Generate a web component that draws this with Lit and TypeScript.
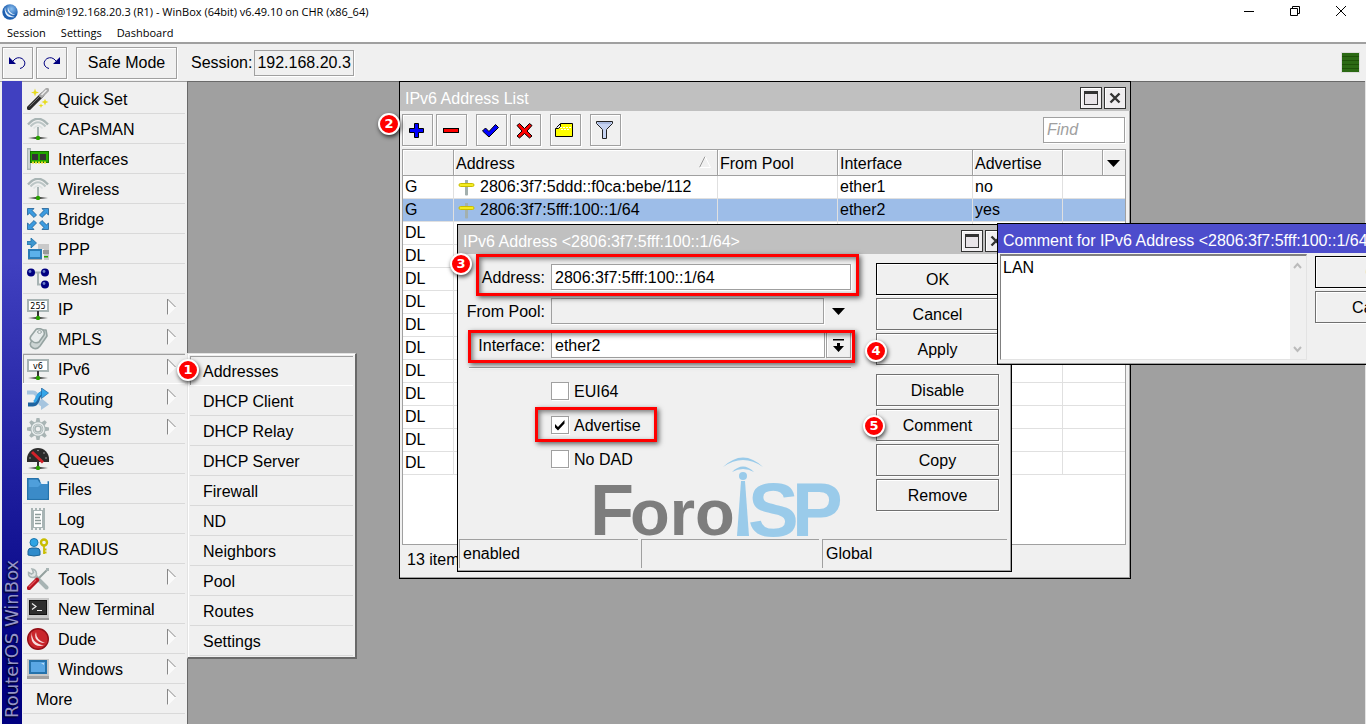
import { LitElement, html, svg, css, nothing } from "lit";

const GREY = "#a8b4b4";

const base = svg`
  <defs><linearGradient id="fade"><stop offset="0" stop-color="#333" stop-opacity="0"/>
  <stop offset=".5" stop-color="#111"/><stop offset="1" stop-color="#333" stop-opacity="0"/></linearGradient></defs>
  <rect x="1" y="19" width="20" height="2" fill="url(#fade)"/>
  <circle cx="11" cy="20" r="2.2" fill="#2aa000"/>`;

const stand = svg`<rect x="10" y="13" width="2" height="6" fill="#333"/>${base}`;

const antenna = svg`
  <g fill="none">
    <path d="M1 6.500Q11 -5 21 6.500" stroke="${GREY}" stroke-width="2.400"/>
    <path d="M3.500 8.500Q11 0 18.500 8.500" stroke="#bcc6c6" stroke-width="2.200"/>
    <path d="M6.500 10.500Q11 5 15.500 10.500" stroke="#dde2e2" stroke-width="1.600"/>
  </g>
  <rect x="10" y="9" width="2" height="10" fill="${GREY}"/>${base}`;

const sign = (label: string) => svg`
  <rect x="1" y="2" width="20" height="11" fill="#fff" stroke="${GREY}" stroke-width="2"/>
  <text x="11" y="11" text-anchor="middle" font-family="DejaVu Sans, sans-serif" font-size="8" fill="#000">${label}</text>
  ${stand}`;

const ICONS: Record<string, unknown> = {
  wand: svg`
    <path d="M2 20L15 7" stroke="#2b2b2b" stroke-width="4.500" stroke-linecap="round"/>
    <path d="M2.500 18.500L14 7" stroke="#777" stroke-width="1"/>
    <path d="M14.500 7.500L20 2" stroke="#a9a9a9" stroke-width="4.500" stroke-linecap="round"/>
    <path d="M14.500 7L19.500 2" stroke="#eee" stroke-width="1.500"/>
    <path d="M8 .5L9 3.500L12 4.500L9 5.500L8 8.500L7 5.500L4 4.500L7 3.500ZM18 11L19 13L21.500 14L19 15L18 17.500L17 15L14.500 14L17 13ZM14 15.500L14.700 17L16.500 17.500L14.700 18.200L14 20L13.300 18.200L11.500 17.500L13.300 17Z" fill="#e6dc1e"/>`,
  antenna,
  card: svg`
    <rect x=".75" y=".75" width="2.500" height="20.500" fill="#eef2f2" stroke="${GREY}" stroke-width="1.500"/>
    <rect x="3.500" y="3.500" width="18" height="11" fill="#22a800" stroke="#157000"/>
    <rect x="5" y="6" width="6" height="6" fill="#333"/><rect x="13" y="6" width="6" height="6" fill="#333"/>
    <path d="M5 14.500H20" stroke="#e6dc1e" stroke-width="2" stroke-dasharray="2 1"/>`,
  bridge: svg`
    <g fill="#3c9be0" stroke="#1f5f94" stroke-width=".8">
      ${[0, 90, 180, 270].map((a) => svg`<path transform="rotate(${a} 11 11)" d="M.5 .5H7L5.200 2.600L9.500 7L7 9.500L2.600 5.200L.5 7Z"/>`)}
    </g>`,
  ppp: svg`
    <path d="M0 3.500H4V0L9.500 5L4 10V6.500H0Z" fill="#3d96cf" stroke="#1d6ea6" stroke-width=".8"/>
    <path d="M11 6H22V22H17V11H11Z" fill="#c9c9c9"/><rect x="16" y="12" width="6" height="4" fill="#999"/>
    <rect x="17" y="18" width="4" height="1.500" fill="#2aa000"/>
    <rect x="2" y="12" width="12" height="8" fill="#5cb0ea" stroke="#2b7cb6" stroke-width="2"/>
    <rect x="1" y="21" width="14" height="1" fill="#aaa"/>`,
  mesh: svg`
    <path d="M4 4.500H18M11 4.500V16.500H18" fill="none" stroke="${GREY}" stroke-width="2"/>
    ${[[4, 4.5], [18, 4.5], [18, 16.5]].map(([x, y]) => svg`<circle cx="${x}" cy="${y}" r="4" fill="#000080"/><circle cx="${x - 1}" cy="${y - 1}" r="1.400" fill="#6a7fc8"/>`)}`,
  ip: sign("255"),
  ipv6: sign("v6"),
  mpls: svg`
    <g stroke="#95a3a1" stroke-width="1.600" fill="#cdd5d4" stroke-linejoin="round">
      <path d="M9 9L14 2H19L20 8L13 18Q10 22 6 20Q2 18 4 14Z"/>
      <path d="M4 8L9 1.500Q12 -.5 16 2Q18 4 17 7L12 14Q8 16 5 13Q2 11 4 8Z" fill="#e8ecec"/>
    </g><ellipse cx="12.500" cy="4" rx="2" ry="1.300" fill="#fff" stroke="#95a3a1"/>`,
  routing: svg`
    <path d="M0 4.500H6C13 4.500 9 16.500 16 16.500" fill="none" stroke="#a6c5df" stroke-width="4"/>
    <path d="M14 10L22 16.500L14 22Z" fill="#a6c5df"/>
    <path d="M1 16.500H6C13 16.500 9 5 16 5" fill="none" stroke="#1f64a0" stroke-width="4"/>
    <path d="M7 14C11 12 9 5 15.500 5" fill="none" stroke="#35a5e8" stroke-width="3"/>
    <path d="M14.500 0L21.500 5L14.500 10.500Z" fill="#35a5e8" stroke="#1f64a0" stroke-width=".7"/>`,
  gear: svg`
    <g fill="${GREY}">${[0, 45, 90, 135, 180, 225, 270, 315].map((a) => svg`<path transform="rotate(${a} 11 11)" d="M8.500 5L9.500 0H12.500L13.500 5Z"/>`)}</g>
    <circle cx="11" cy="11" r="6" fill="#e3e8e8" stroke="${GREY}" stroke-width="3"/>
    <circle cx="11" cy="11" r="6" fill="none" stroke="#e9eded" stroke-width="1.400"/>
    <circle cx="11" cy="11" r="3" fill="#f0f0f0" stroke="${GREY}" stroke-width="1.500"/>`,
  gauge: svg`
    <path d="M0 14V11A11 11 0 0 1 22 11V14Z" fill="#2b2b2b"/>
    <g fill="#aaa"><circle cx="3" cy="10" r=".8"/><circle cx="11" cy="2.500" r=".8"/><circle cx="17" cy="5" r=".8"/><circle cx="19" cy="10" r=".8"/></g>
    <path d="M5 4L16 14.500" stroke="#d3222a" stroke-width="3"/>${stand}`,
  folder: svg`
    <path d="M.8 .8H11L13 4H21.200V21.200H.8Z" fill="#4f9fdb" stroke="#2572ab" stroke-width="1.600"/>
    <path d="M13 3H20.500V6H14.500Z" fill="#e9f1f8"/><path d="M2 20.500V9H11L14 6H20.500V20.500Z" fill="#3b8bc8"/>`,
  log: svg`
    <path d="M4 0H6V2H8V0H10V2H12V0H14V2H16V0H18V22H16V20H14V22H12V20H10V22H8V20H6V22H4Z" fill="${GREY}"/>
    <rect x="7" y="3" width="8" height="16" fill="#fff"/>
    <path d="M8 6.500H14M8 9.500H13M8 12.500H14M8 15.500H14" stroke="#8d9b99" stroke-width="1.500"/>`,
  user: svg`
    <circle cx="7" cy="4.500" r="4" fill="#2fa4e4" stroke="#1b77ae"/>
    <path d="M1 17V13Q1 10 5 10H9Q13 10 13 13V17Q7 19 1 17Z" fill="#2f8bcb" stroke="#1b6396"/>
    <circle cx="17" cy="4.500" r="3" fill="none" stroke="#c9bd00" stroke-width="2.400"/>
    <path d="M17 8V16M17 11.500H19.500M17 14.500H19.500" fill="none" stroke="#c9bd00" stroke-width="1.800"/>`,
  tools: svg`
    <path d="M8 8L19.500 19.500" stroke="${GREY}" stroke-width="4" stroke-linecap="round"/>
    <path d="M1.500 4.500Q1 9 5.500 9.500Q9.500 9.500 9.500 5.500Q9 1.500 5 1L6.500 4.500L4.500 6Z" fill="#e0e5e5" stroke="${GREY}" stroke-width="1.500"/>
    <path d="M10 12L20.500 1.500" stroke="#93a09e" stroke-width="2"/><rect x="19" y="0" width="3" height="3" fill="${GREY}"/>
    <path d="M2 20L10 12" stroke="#b5141f" stroke-width="4.500" stroke-linecap="round"/>
    <path d="M2 19L9 12" stroke="#e5525a" stroke-width="1.200"/>`,
  terminal: svg`
    <rect width="22" height="22" fill="#c8c8c8"/><rect y="20" width="22" height="2" fill="#999"/>
    <rect x="2.500" y="2.500" width="17" height="14" fill="#2d2d2d" stroke="#111"/>
    <path d="M5 5.500L9 8.500L5 11.500M10 12.500H15" fill="none" stroke="#eee" stroke-width="1.200"/>`,
  dude: svg`
    <circle cx="11" cy="11" r="10.300" fill="#c9262c" stroke="#930e16" stroke-width="1.400"/>
    <path d="M5 4Q4 15 17 17.500Q8 19.500 5 13Q3.500 9 5 4ZM9 4Q9 12 18 15Q11 15 8.500 10Q7.500 7 9 4Z" fill="#f7dede"/>`,
  monitor: svg`
    <rect y="1" width="22" height="20" fill="#c8c8c8"/><rect y="18" width="22" height="3" fill="#a2a2a2"/>
    <rect x="3" y="3" width="16" height="12" fill="#5aa7e4" stroke="#2572ab" stroke-width="2"/>
    <path d="M14 5H17V7Z" fill="#b9dcf6"/>`,
};

const MENU: [string, string, boolean][] = [
  ["Quick Set", "wand", false],
  ["CAPsMAN", "antenna", false],
  ["Interfaces", "card", false],
  ["Wireless", "antenna", false],
  ["Bridge", "bridge", false],
  ["PPP", "ppp", false],
  ["Mesh", "mesh", false],
  ["IP", "ip", true],
  ["MPLS", "mpls", true],
  ["IPv6", "ipv6", true],
  ["Routing", "routing", true],
  ["System", "gear", true],
  ["Queues", "gauge", false],
  ["Files", "folder", false],
  ["Log", "log", false],
  ["RADIUS", "user", false],
  ["Tools", "tools", true],
  ["New Terminal", "terminal", false],
  ["Dude", "dude", true],
  ["Windows", "monitor", true],
  ["More", "", true],
];

const SUBMENU = ["Addresses", "DHCP Client", "DHCP Relay", "DHCP Server", "Firewall", "ND", "Neighbors", "Pool", "Routes", "Settings"];

const ROWS = [
  { flag: "G", address: "2806:3f7:5ddd::f0ca:bebe/112", iface: "ether1", adv: "no", selected: false },
  { flag: "G", address: "2806:3f7:5fff:100::1/64", iface: "ether2", adv: "yes", selected: true },
  ...Array.from({ length: 11 }, () => ({ flag: "DL", address: "", iface: "", adv: "", selected: false })),
];

/* Step markers and frames, placed on the desktop canvas. */
const STEPS = [
  { n: 1, x: 177, y: 278 },
  { n: 2, x: 378, y: 32 },
  { n: 3, x: 450, y: 172 },
  { n: 4, x: 865, y: 259 },
  { n: 5, x: 863, y: 334 },
];
const FRAMES = [
  { x: 476, y: 173, w: 383, h: 42 },
  { x: 468, y: 249, w: 387, h: 33 },
  { x: 535, y: 326, w: 122, h: 35 },
];

const TOOLS: [string, unknown, boolean][] = [
  ["Add", svg`<path d="M7.500 3.500H11.500V8.500H16.500V12.500H11.500V17.500H7.500V12.500H2.500V8.500H7.500Z" fill="#00f" stroke="#000"/>`, false],
  ["Remove", svg`<rect x="2.500" y="8.500" width="15" height="4" fill="#f00" stroke="#000"/>`, true],
  ["Enable", svg`<path d="M1.500 11L4.500 8L8 11.500L14.500 4.500L17.500 7.500L8 17Z" fill="#00f" stroke="#000"/>`, false],
  ["Disable", svg`<path d="M2 5.500L4.500 3.500L9.500 8.500L14.500 3.500L17 5.500L12 11L17 16L14.500 18L9.500 13.500L4.500 18L2 16L7 11Z" fill="#f00" stroke="#000"/>`, true],
  ["Comment", svg`<path d="M5.500 3.500H17.500V16.500H.5V8.500H3.500L5.500 6.500Z" fill="#ff0" stroke="#000"/><path d="M1.500 7.500L5 4" stroke="#000"/><path d="M5 7.500H16M6 9.500H15" stroke="#fff" stroke-dasharray="2 1"/>`, true],
  ["Filter", svg`<path d="M1.500 1.500H17.500V3.500L11.500 9.500V18.500H7.500V9.500L1.500 3.500Z" fill="#c7d4f2" stroke="#222"/><path d="M3 3H16" stroke="#8fa2cf"/>`, false],
];

const windowButtons = html`
  <button class="wb" aria-label="Maximize"><svg width="16" height="16" viewBox="0 0 16 16"><rect x="1.500" y="1.500" width="13" height="13" fill="#e8e4e8" stroke="#333"/><rect x="1" y="1" width="14" height="3" fill="#333"/></svg></button>
  <button class="wb" aria-label="Close"><svg width="16" height="16" viewBox="0 0 16 16"><path d="M3.500 3.500L12.500 12.500M12.500 3.500L3.500 12.500" stroke="#333" stroke-width="2.400"/></svg></button>`;

class AppRoot extends LitElement {
  static styles = css`
    :host {
      display: flex;
      flex-direction: column;
      height: 100vh;
      overflow: hidden;
      background: #f0f0f0;
      color: #000;
      font: 16px/20px "Liberation Sans", Arial, sans-serif;
    }
    * { box-sizing: border-box; }
    button, input, select, textarea {
      font: inherit;
      color: inherit;
      margin: 0;
      padding: 0;
      border-radius: 0;
      outline: none;
    }
    svg { display: block; flex: none; }
    ul { list-style: none; margin: 0; padding: 0; }

    .caption, .menubar {
      display: flex;
      align-items: center;
      background: #fff;
      font: 11px/16px "Open Sans", "Noto Sans", sans-serif;
    }
    .caption { height: 24px; padding: 0 17px 0 2px; gap: 5px; }
    .caption .name { flex: 1; white-space: nowrap; }
    .caption .sys { display: flex; gap: 30px; }
    .caption .sys button { border: 0; background: none; width: 16px; height: 16px; }
    .menubar { height: 18px; padding: 0 7px; gap: 15px; }
    .menubar button { border: 0; background: none; }

    .toolbar {
      display: flex;
      align-items: center;
      height: 39px;
      padding: 0 6px 0 2px;
      border-top: 2px solid #a0a0a0;
      gap: 3px;
    }
    .btn {
      display: flex;
      align-items: center;
      justify-content: center;
      height: 32px;
      background: #f0f0f0;
      border: 1px solid #a0a0a0;
      box-shadow: 1px 1px 0 #fff, inset 1px 1px 0 #fff;
    }
    .square { width: 31px; }
    .safe { width: 101px; margin: 0 11px 0 6px; }
    .session { display: flex; flex: 1; align-items: center; gap: 2px; }
    .session .field { width: 100px; padding: 0 2px; }
    .field {
      height: 26px;
      border: 1px solid #a0a0a0;
      background: #fff;
      padding: 1px 3px 0;
      box-shadow: 1px 1px 0 #fff;
      min-width: 0;
    }
    .readonly { background: #f0f0f0; }
    .load {
      width: 19px;
      height: 21px;
      border: 1px solid #ddd;
      background: repeating-linear-gradient(#2c6a14 0 3px, #1e5208 3px 4px);
    }

    .main {
      position: relative;
      display: flex;
      flex: 1;
      min-height: 0;
      box-shadow: inset 0 1px 0 #a0a0a0;
    }
    .brand {
      flex: none;
      width: 20px;
      margin: 0 0 0 2px;
      padding: 6px 0;
      background: linear-gradient(to top, #4040c0 0 28%, #000080 92%);
      color: #9494c8;
      font: 18px/20px "DejaVu Sans", sans-serif;
      writing-mode: vertical-rl;
      transform: rotate(180deg);
      text-shadow: -1px -1px 2px #000;
      white-space: nowrap;
    }
    nav { flex: none; width: 165px; padding: 3px 2px 0 1px; }
    .item {
      display: flex;
      align-items: center;
      width: 100%;
      height: 30px;
      padding: 0 9px 0 4px;
      gap: 9px;
      border: 0;
      border-bottom: 1px solid #d9d9d9;
      background: #f0f0f0;
      text-align: left;
    }
    .label { flex: 1; padding-top: 2px; white-space: nowrap; }
    .arrow { margin-bottom: 4px; }
    .item.plain { padding-left: 13px; }
    .item.on { box-shadow: inset 1px 1px 0 #a0a0a0; border-bottom-color: #fff; }
    .entry { position: relative; }
    .sub {
      position: absolute;
      z-index: 5;
      left: 164px;
      top: -1px;
      width: 170px;
      padding: 2px 2px 1px;
      background: #f0f0f0;
      border: 1px solid #e3e3e3;
      border-right: 2px solid #696969;
      border-bottom: 2px solid #696969;
      box-shadow: inset 1px 1px 0 #fff;
    }
    .sub .item { padding-left: 13px; }

    .desktop {
      position: relative;
      flex: 1;
      overflow: hidden;
      background: #a0a0a0;
      border-left: 1px solid #696969;
      box-shadow: inset -1px 0 0 #e3e3e3, inset 0 1px 0 #696969;
    }
    .win {
      position: absolute;
      display: flex;
      flex-direction: column;
      background: #f0f0f0;
      border: 1px solid #000;
      box-shadow: inset -1px -1px 0 #a0a0a0;
    }
    .list { left: 211px; top: 0; width: 732px; height: 498px; }
    .detail { left: 269px; top: 143px; width: 555px; height: 348px; }
    .comment { left: 809px; top: 142px; width: 455px; height: 142px; }
    .title {
      display: flex;
      flex: none;
      align-items: center;
      height: 29px;
      padding: 2px 4px 0 5px;
      gap: 2px;
      background: #c0c0c0;
      color: #fff;
      white-space: nowrap;
    }
    .title span { flex: 1; padding-top: 2px; }
    .active { background: #4d4dcc; }
    .wb {
      display: grid;
      place-items: center;
      width: 22px;
      height: 22px;
      border: 1px solid #333;
      background: #f0eef0;
      box-shadow: inset 1px 1px 0 #fff;
    }

    .strip { display: flex; align-items: center; height: 38px; padding: 0 5px 0 2px; gap: 3px; }
    .strip .gap { margin-right: 6px; }
    .strip .find { width: 82px; padding-top: 0; margin-left: auto; font-style: italic; }
    .find::placeholder { color: #a0a0a0; opacity: 1; }

    .grid { flex: 1; margin: 0 4px 3px 2px; background: #fff; border: 1px solid #a0a0a0; }
    table { width: 100%; table-layout: fixed; border-collapse: separate; border-spacing: 0; }
    th, td { padding: 0 2px; text-align: left; font-weight: 400; white-space: nowrap; }
    th { height: 26px; padding-top: 2px; background: #f0f0f0; border-right: 1px solid #a0a0a0; border-bottom: 1px solid #a0a0a0; box-shadow: inset 1px 1px 0 #fff; }
    td { height: 23px; border-right: 1px solid #e0e0e0; border-bottom: 1px solid #e0e0e0; }
    th:last-child, td:last-child { border-right: 0; }
    .selected td { background: #9dbde8; }
    .c-flag { width: 51px; }
    .c-pool { width: 120px; }
    .c-iface { width: 135px; }
    .c-adv { width: 90px; }
    .c-pad { width: 40px; }
    .c-drop { width: 22px; }
    .line { display: flex; align-items: center; gap: 5px; }
    th .line { justify-content: space-between; padding-right: 4px; }
    th .line svg { margin-bottom: 4px; }
    td .line { padding-left: 2px; }
    .drop { border: 0; background: none; display: grid; place-items: center; width: 17px; height: 20px; }
    .count { flex: none; height: 27px; margin: 0 4px 3px 2px; padding: 2px 5px 0; }

    .form { display: flex; flex: 1; gap: 25px; padding: 9px 12px 0 5px; }
    .fields { flex: 1; display: flex; flex-direction: column; padding-top: 1px; }
    .rows { display: grid; grid-template-columns: 82px 1fr; gap: 8px 6px; align-items: center; }
    .rows label { padding-top: 1px; text-align: right; white-space: nowrap; }
    .combo { display: flex; gap: 1px; }
    .combo .field { flex: 1; appearance: none; }
    .combo .btn { width: 25px; height: 26px; }
    .combo .bare { width: 25px; height: 26px; }
    .combo .readonly { margin-right: 1px; }
    hr { width: calc(100% - 6px); margin: 9px 0 12px 6px; border: 0; border-top: 1px solid #a0a0a0; border-bottom: 1px solid #fff; }
    .checks { display: flex; flex-direction: column; gap: 14px; padding-left: 88px; }
    .checks label { display: flex; align-items: center; gap: 5px; height: 20px; }
    .checks .text { padding-top: 2px; }
    .checks input {
      appearance: none;
      width: 18px;
      height: 18px;
      border: 1px solid #a0a0a0;
      background: #fff;
      box-shadow: 1px 1px 0 #fff;
    }
    .tick { position: relative; display: grid; place-items: center; }
    .tick svg { position: absolute; pointer-events: none; }
    .actions { display: flex; flex-direction: column; gap: 3px; width: 123px; }
    .actions .btn { padding-top: 1px; border-color: #707070; }
    .actions .primary { border-color: #000; }
    .actions .apart { margin-top: 6px; }
    .status { display: grid; grid-template-columns: 179px 178px 1fr; gap: 3px; height: 28px; margin: 0 4px 4px 1px; flex: none; }
    .status span { padding: 4px 3px; border-top: 1px solid #a0a0a0; border-left: 1px solid #a0a0a0; }
    .logo { position: absolute; left: 132px; top: 228px; overflow: visible; pointer-events: none; }

    .note { display: flex; flex: 1; min-height: 0; gap: 8px; padding: 1px 12px 4px 2px; }
    .note textarea {
      width: 289px;
      resize: none;
      border: 0;
      padding: 2px;
      overflow: hidden;
      background: #fff;
    }
    .memo { display: flex; flex: none; border: 1px solid #808080; border-top-width: 2px; border-right-color: #e3e3e3; border-bottom-color: #e3e3e3; }
    .bar { display: flex; flex-direction: column; justify-content: space-between; width: 16px; padding: 6px 3px; }
    .note .actions { padding-top: 2px; width: 125px; }

    .frame, .step { position: absolute; z-index: 6; pointer-events: none; }
    .frame { border: 3px solid #f00; box-shadow: 2px 2px 5px rgba(0, 0, 0, 0.6), inset 2px 2px 5px rgba(0, 0, 0, 0.5); }
    .step {
      display: grid;
      place-items: center;
      width: 22px;
      height: 22px;
      border: 2px solid #fff;
      border-radius: 50%;
      background: #f00;
      color: #fff;
      font: bold 13px/18px "DejaVu Sans", sans-serif;
      box-shadow: 1px 2px 4px rgba(0, 0, 0, 0.7);
    }
  `;

  menuItem(label: string, icon: string, more: boolean) {
    const on = label === "IPv6";
    return html`<li class="entry">
      <button class="item ${on ? "on" : ""} ${icon ? "" : "plain"}">
        ${icon ? html`<svg width="22" height="22" viewBox="0 0 22 22" aria-hidden="true">${ICONS[icon]}</svg>` : nothing}
        <span class="label">${label}</span>
        ${more
          ? html`<svg class="arrow" width="9" height="18" viewBox="0 0 9 18"><path d="M.5 17V1L8.500 9Z" fill="#fafafa"/><path d="M.5 17V1L8.500 9" fill="none" stroke="#888"/><path d="M8.500 9L.5 17" stroke="#fff"/></svg>`
          : nothing}
      </button>
      ${on
        ? html`<ul class="sub">${SUBMENU.map((s, i) => html`<li><button class="item ${i === 0 ? "on" : ""}"><span class="label">${s}</span></button></li>`)}</ul>`
        : nothing}
    </li>`;
  }

  listWindow() {
    return html`<section class="win list">
      <header class="title"><span>IPv6 Address List</span>${windowButtons}</header>
      <div class="strip">
        ${TOOLS.map(([name, glyph, gap]) => html`<button class="btn square ${gap ? "gap" : ""}" aria-label=${name}><svg width="21" height="21" viewBox="0 0 21 21">${glyph}</svg></button>`)}
        <input class="field find" placeholder="Find" aria-label="Find" />
      </div>
      <div class="grid">
        <table>
          <colgroup><col class="c-flag" /><col /><col class="c-pool" /><col class="c-iface" /><col class="c-adv" /><col class="c-pad" /><col class="c-drop" /></colgroup>
          <thead><tr>
            <th></th>
            <th><div class="line">Address<svg width="12" height="12" viewBox="0 0 12 12"><path d="M6 .5L.5 11.500" stroke="#999"/><path d="M6 .5L11.500 11.500H.5" fill="none" stroke="#fff"/></svg></div></th>
            <th>From Pool</th><th>Interface</th><th>Advertise</th><th></th>
            <th><button class="drop" aria-label="Columns"><svg width="13" height="7" viewBox="0 0 13 7"><path d="M0 0H13L6.500 7Z"/></svg></button></th>
          </tr></thead>
          <tbody>
            ${ROWS.map((r) => html`<tr class=${r.selected ? "selected" : ""}>
              <td>${r.flag}</td>
              <td>${r.address
                ? html`<div class="line"><svg width="17" height="17" viewBox="0 0 17 17"><path d="M7 1H10V16Q8.500 17 7 16Z" fill="#a3b0ae"/><rect x="1" y="4.500" width="15" height="3" rx="1.500" fill="#f4ec20" stroke="#c9bd00"/></svg>${r.address}</div>`
                : nothing}</td>
              <td></td><td>${r.iface}</td><td>${r.adv}</td><td colspan="2"></td>
            </tr>`)}
          </tbody>
        </table>
      </div>
      <footer class="count">13 items</footer>
    </section>`;
  }

  detailWindow() {
    return html`<section class="win detail">
      <header class="title"><span>IPv6 Address &lt;2806:3f7:5fff:100::1/64&gt;</span>${windowButtons}</header>
      <div class="form">
        <div class="fields">
          <div class="rows">
            <label for="address">Address:</label>
            <input id="address" class="field" .value=${"2806:3f7:5fff:100::1/64"} />
            <label for="pool">From Pool:</label>
            <div class="combo">
              <select id="pool" class="field readonly"><option></option></select>
              <button class="drop bare" aria-label="Choose pool"><svg width="13" height="7" viewBox="0 0 13 7"><path d="M0 0H13L6.500 7Z"/></svg></button>
            </div>
            <label for="iface">Interface:</label>
            <div class="combo">
              <select id="iface" class="field"><option>ether2</option></select>
              <button class="btn" aria-label="Choose interface"><svg width="11" height="13" viewBox="0 0 11 13"><path d="M0 0H11V1.500H0ZM4 4H7V7H11L5.500 13L0 7H4Z"/></svg></button>
            </div>
          </div>
          <hr />
          <div class="checks">
            ${[["EUI64", false], ["Advertise", true], ["No DAD", false]].map(([name, on]) => html`<label>
              <span class="tick"><input type="checkbox" ?checked=${on as boolean} />${on
                ? html`<svg width="12" height="12" viewBox="0 0 12 12"><path d="M1 5L4 8L10.500 1V4.500L4 11.500L1 8.500Z"/></svg>`
                : nothing}</span><span class="text">${name}</span></label>`)}
          </div>
        </div>
        <div class="actions">
          <button class="btn primary">OK</button>
          <button class="btn">Cancel</button>
          <button class="btn">Apply</button>
          <button class="btn apart">Disable</button>
          <button class="btn">Comment</button>
          <button class="btn">Copy</button>
          <button class="btn">Remove</button>
        </div>
      </div>
      <svg class="logo" width="256" height="104" viewBox="0 0 256 104" font-family="Liberation Sans, Arial, sans-serif" font-weight="700" aria-label="ForoISP">
        <text x="0" y="82" font-size="72" fill="#7d7d7d">F</text>
        <text x="40" y="82" font-size="65" fill="#7d7d7d">oro</text>
        <g fill="#9acbea"><circle cx="153" cy="23" r="4"/><path d="M151 28H155L159 83H147Z"/>
        <path d="M133 14Q153 -5 173 14Q153 0 133 14ZM142 19Q153 8 164 19Q153 13 142 19Z"/></g>
        <text x="158" y="83" font-size="76" fill="#9acbea">S</text>
        <text x="202" y="83" font-size="76" fill="#9acbea">P</text>
      </svg>
      <footer class="status"><span>enabled</span><span></span><span>Global</span></footer>
    </section>`;
  }

  commentWindow() {
    return html`<section class="win comment">
      <header class="title active"><span>Comment for IPv6 Address &lt;2806:3f7:5fff:100::1/64&gt;</span></header>
      <div class="note">
        <div class="memo">
          <textarea aria-label="Comment" .value=${"LAN"}></textarea>
          <div class="bar">
            <svg width="9" height="8" viewBox="0 0 9 8"><path d="M1 6L4.500 2L8 6" fill="none" stroke="#bbb" stroke-width="2"/></svg>
            <svg width="9" height="8" viewBox="0 0 9 8"><path d="M1 2L4.500 6L8 2" fill="none" stroke="#bbb" stroke-width="2"/></svg>
          </div>
        </div>
        <div class="actions"><button class="btn primary">OK</button><button class="btn">Cancel</button></div>
      </div>
    </section>`;
  }

  render() {
    return html`
      <header class="caption">
        <svg width="16" height="16" viewBox="0 0 16 16"><defs><radialGradient id="ball" cx=".6" cy=".3"><stop offset="0" stop-color="#8cc0f0"/><stop offset="1" stop-color="#1d5fb0"/></radialGradient></defs>
          <circle cx="8" cy="8" r="7.700" fill="url(#ball)"/><path d="M3 3Q3 11 13 13Q6 14.500 3.500 9.500Q2 6 3 3ZM6 3Q6.500 9 13.500 11Q8 11 6 7Q5.500 5 6 3Z" fill="#eaf4ff"/></svg>
        <span class="name">admin@192.168.20.3 (R1) - WinBox (64bit) v6.49.10 on CHR (x86_64)</span>
        <div class="sys">
          <button aria-label="Minimize"><svg width="16" height="16" viewBox="0 0 16 16"><path d="M3 7.500H13" stroke="#000"/></svg></button>
          <button aria-label="Restore"><svg width="16" height="16" viewBox="0 0 16 16"><path d="M3.500 4.500H10.500V11.500H3.500ZM5.500 4.500V2.500H12.500V9.500H10.500" fill="none" stroke="#000"/></svg></button>
          <button aria-label="Close"><svg width="16" height="16" viewBox="0 0 16 16"><path d="M3 2L13 12M13 2L3 12" stroke="#000"/></svg></button>
        </div>
      </header>
      <div class="menubar"><button>Session</button><button>Settings</button><button>Dashboard</button></div>
      <div class="toolbar">
        <button class="btn square" aria-label="Undo"><svg width="17" height="14" viewBox="0 0 17 14"><path d="M0 1V8H7Z" fill="#000080"/><path d="M4 5Q8 0 13 2.500Q17.500 6 15 10Q13.500 12 11 12.500" fill="none" stroke="#000080"/></svg></button>
        <button class="btn square" aria-label="Redo"><svg width="17" height="14" viewBox="0 0 17 14"><path d="M17 1V8H10Z" fill="#000080"/><path d="M13 5Q9 0 4 2.500Q-.5 6 2 10Q3.500 12 6 12.500" fill="none" stroke="#000080"/></svg></button>
        <button class="btn safe">Safe Mode</button>
        <div class="session"><label for="session">Session:</label><input id="session" class="field readonly" .value=${"192.168.20.3"} /></div>
        <div class="load"></div>
      </div>
      <div class="main">
        <div class="brand">RouterOS WinBox</div>
        <nav><ul>${MENU.map(([label, icon, more]) => this.menuItem(label, icon, more))}</ul></nav>
        <main class="desktop">${this.listWindow()}${this.detailWindow()}${this.commentWindow()}</main>
        ${FRAMES.map((f) => html`<div class="frame" style="left:${f.x}px;top:${f.y}px;width:${f.w}px;height:${f.h}px"></div>`)}
        ${STEPS.map((s) => html`<div class="step" style="left:${s.x}px;top:${s.y}px">${s.n}</div>`)}
      </div>`;
  }
}

customElements.define("app-root", AppRoot);
